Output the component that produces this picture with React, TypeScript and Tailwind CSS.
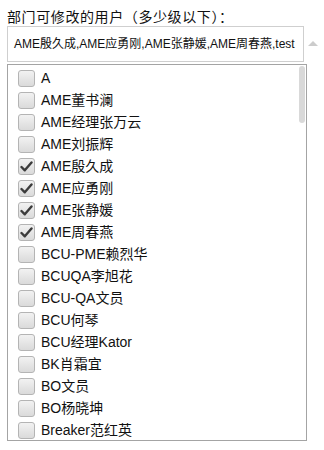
import React from "react";

const users = [
  { name: "A", checked: false },
  { name: "AME董书澜", checked: false },
  { name: "AME经理张万云", checked: false },
  { name: "AME刘振辉", checked: false },
  { name: "AME殷久成", checked: true },
  { name: "AME应勇刚", checked: true },
  { name: "AME张静媛", checked: true },
  { name: "AME周春燕", checked: true },
  { name: "BCU-PME赖烈华", checked: false },
  { name: "BCUQA李旭花", checked: false },
  { name: "BCU-QA文员", checked: false },
  { name: "BCU何琴", checked: false },
  { name: "BCU经理Kator", checked: false },
  { name: "BK肖霜宜", checked: false },
  { name: "BO文员", checked: false },
  { name: "BO杨晓坤", checked: false },
  { name: "Breaker范红英", checked: false },
];

const Box = ({ checked }: { checked: boolean }) => (
  <span className="flex h-[17px] w-[17px] shrink-0 items-center justify-center rounded-[3px] border border-[#b4b4b4] bg-gradient-to-b from-[#f2f2f2] to-[#dadada]">
    {checked && (
      <svg width="13" height="13" viewBox="0 0 13 13">
        <path d="M1.5 7 L4.8 10.3 L11.5 2.5" fill="none" stroke="#3c3c3c" strokeWidth="2.4" strokeLinejoin="round" strokeLinecap="round" />
      </svg>
    )}
  </span>
);

export default function App() {
  return (
    <div className="h-[450px] w-[324px] bg-white pl-[7px] pt-[9px] font-['Liberation_Sans','Noto_Sans_CJK_SC',sans-serif] text-[#111]">
      <div className="text-[14px] leading-[17px] tracking-[0.6px] whitespace-nowrap">部门可修改的用户（多少级以下）：</div>

      <div className="flex items-center">
        <div className="flex h-[36px] w-[297px] items-center border border-[#cfcfcf] pl-[6px] text-[12px] whitespace-nowrap overflow-hidden">
          AME殷久成,AME应勇刚,AME张静媛,AME周春燕,test
        </div>
        <svg width="12" height="8" viewBox="0 0 12 8" className="ml-[3px] mb-[2px]">
          <path d="M1 7 L6 2 L11 7 Z" fill="#cccccc" />
        </svg>
      </div>

      <div className="relative mt-[2px] h-[377px] w-[300px] overflow-hidden border border-[#a4a4a4]">
        <ul className="pt-[2px] pl-[10px]">
          {users.map((u) => (
            <li key={u.name} className="flex h-[22px] items-center gap-[6px] text-[14px]">
              <Box checked={u.checked} />
              <span>{u.name}</span>
            </li>
          ))}
        </ul>
        <div className="absolute right-[1px] top-[1px] h-[57px] w-[6px] rounded-full bg-[#d9d9d9]" />
      </div>
    </div>
  );
}
